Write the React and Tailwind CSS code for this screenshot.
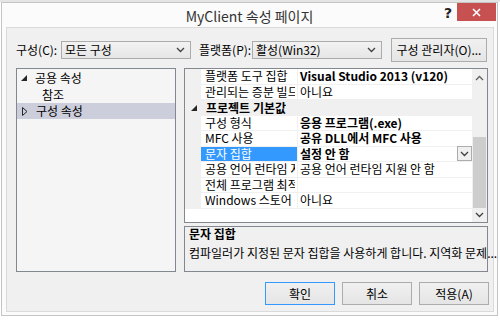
import React from "react";

const Chevron = ({ className = "" }) => (
  <svg width="9" height="6" viewBox="0 0 9 6" className={className}>
    <path d="M1 1 L4.5 4.5 L8 1" fill="none" stroke="#404040" strokeWidth="1.3" />
  </svg>
);
const ChevronUp = () => (
  <svg width="9" height="6" viewBox="0 0 9 6">
    <path d="M1 5 L4.5 1.5 L8 5" fill="none" stroke="#606060" strokeWidth="1.3" />
  </svg>
);

function Select({ w, text }) {
  return (
    <div className={`${w} h-[18px] border border-[#acacac] bg-gradient-to-b from-[#f2f2f2] to-[#e6e6e6] flex items-center justify-between pl-[3px] pr-[5px]`}>
      <span className="text-[12px] leading-none">{text}</span>
      <Chevron />
    </div>
  );
}

function Btn({ w, children, def }) {
  return (
    <div className={`${w} h-[23px] border ${def ? "border-[#3399ff]" : "border-[#acacac]"} bg-gradient-to-b from-[#f0f0f0] to-[#e5e5e5] flex items-center justify-center text-[12px] leading-none`}>
      {children}
    </div>
  );
}

const rows = [
  { n: "플랫폼 도구 집합", v: "Visual Studio 2013 (v120)", b: true },
  { n: "관리되는 증분 빌드 .", v: "아니요" },
  { cat: "프로젝트 기본값" },
  { n: "구성 형식", v: "응용 프로그램(.exe)", b: true },
  { n: "MFC 사용", v: "공유 DLL에서 MFC 사용", b: true },
  { n: "문자 집합", v: "설정 안 함", b: true, sel: true },
  { n: "공용 언어 런타임 지원", v: "공용 언어 런타임 지원 안 함" },
  { n: "전체 프로그램 최적화", v: "" },
  { n: "Windows 스토어 응용 프로그램", v: "아니요" },
];

export default function App() {
  return (
    <div className="w-[500px] h-[320px] bg-white relative overflow-hidden font-['Noto_Sans_CJK_KR','Noto_Sans',sans-serif] text-black">
      <div className="h-[2px] bg-[#e4e4e4]" />
      <div className="ml-[1px] w-[497px] h-[314px] border border-[#c4c4c4] bg-[#fbfbfb] flex flex-col">
        {/* title bar */}
        <div className="h-[24px] relative flex items-center justify-center">
          <span className="text-[14px] leading-none text-[#333] mt-[2px]">MyClient 속성 페이지</span>
          <span className="absolute left-[442px] top-[0px] text-[14px] font-bold text-[#222] font-['DejaVu_Sans',sans-serif]">?</span>
          <div className="absolute left-[455px] top-0 w-[39px] h-[18px] bg-[#c75050] flex items-center justify-center">
            <svg width="9" height="9" viewBox="0 0 9 9">
              <path d="M1 1 L8 8 M8 1 L1 8" stroke="white" strokeWidth="1.6" />
            </svg>
          </div>
        </div>
        {/* client */}
        <div className="ml-[4px] mb-[3px] w-[488px] flex-1 border border-[#dadada] bg-[#f0f0f0] flex flex-col">
          {/* config row */}
          <div className="flex items-center mt-[10px] h-[24px]">
            <span className="ml-[9px] w-[45px] text-[12px] leading-none">구성(C):</span>
            <Select w="w-[130px]" text="모든 구성" />
            <span className="ml-[8px] w-[53px] text-[12px] leading-none">플랫폼(P):</span>
            <Select w="w-[130px]" text="활성(Win32)" />
            <div className="ml-[9px] w-[96px] h-[24px] border border-[#acacac] bg-gradient-to-b from-[#f0f0f0] to-[#e5e5e5] flex items-center justify-center text-[12px] leading-none">
              구성 관리자(O)...
            </div>
          </div>
          {/* panels */}
          <div className="flex mt-[6px] h-[204px]">
            {/* tree */}
            <div className="ml-[9px] w-[160px] h-full border border-[#828790] bg-[#f5f5f5] pt-[1px]">
              <div className="h-[16px] flex items-center text-[12px] leading-none">
                <svg width="6" height="6" viewBox="0 0 6 6" className="ml-[4px] mr-[8px]">
                  <path d="M6 0 L6 6 L0 6 Z" fill="#262626" />
                </svg>
                공용 속성
              </div>
              <div className="h-[17px] flex items-center text-[12px] leading-none pl-[25px]">참조</div>
              <div className="h-[16px] flex items-center text-[12px] leading-none bg-[#cccedb]">
                <svg width="6" height="9" viewBox="0 0 6 9" className="ml-[5px] mr-[8px]">
                  <path d="M0.5 0.5 L5 4.5 L0.5 8.5 Z" fill="none" stroke="#262626" strokeWidth="1" />
                </svg>
                구성 속성
              </div>
            </div>
            {/* right */}
            <div className="ml-[8px] w-[304px] h-full flex flex-col">
              <div className="h-[155px] border border-[#828790] bg-white flex">
                <div className="flex-1 flex flex-col overflow-hidden">
                  {rows.map((r, i) =>
                    r.cat ? (
                      <div key={i} className="h-[15.5px] flex items-center bg-[#f0f0f0] text-[12px] leading-none font-bold">
                        <svg width="6" height="6" viewBox="0 0 6 6" className="ml-[6px] mr-[9px]">
                          <path d="M6 0 L6 6 L0 6 Z" fill="#262626" />
                        </svg>
                        {r.cat}
                      </div>
                    ) : (
                      <div key={i} className="h-[15.5px] flex bg-[#f0f0f0]">
                        <div className="w-[16px] shrink-0" />
                        <div className={`w-[96px] shrink-0 overflow-hidden flex items-center pl-[4px] border-b border-[#f0f0f0] ${r.sel ? "bg-[#3399ff] text-white" : "bg-white"}`}>
                          <span className="block w-[90px] overflow-hidden whitespace-nowrap text-[12px] leading-none">{r.n}</span>
                        </div>
                        <div className="w-[1px] bg-[#f0f0f0]" />
                        <div className={`flex-1 flex items-center justify-between pl-[2px] bg-white border-b border-[#f0f0f0] text-[12px] leading-none whitespace-nowrap ${r.b ? "font-bold" : ""}`}>
                          <span>{r.v}</span>
                          {r.sel && (
                            <div className="w-[15px] h-[15px] border border-[#acacac] bg-[#f0f0f0] flex items-center justify-center">
                              <Chevron />
                            </div>
                          )}
                        </div>
                      </div>
                    )
                  )}
                  <div className="flex-1 bg-white" />
                </div>
                {/* scrollbar */}
                <div className="w-[15px] bg-[#f0f0f0] flex flex-col">
                  <div className="h-[17px] flex items-center justify-center"><ChevronUp /></div>
                  <div className="h-[51px]" />
                  <div className="h-[71px] mx-[1px] bg-[#cdcdcd]" />
                  <div className="flex-1 flex items-center justify-center"><Chevron /></div>
                </div>
              </div>
              <div className="mt-[3px] flex-1 border border-[#828790] bg-[#f0f0f0] px-[4px] pt-0">
                <div className="text-[12px] leading-[14px] font-bold">문자 집합</div>
                <div className="text-[12px] leading-[14px] mt-[5px] whitespace-nowrap">컴파일러가 지정된 문자 집합을 사용하게 합니다. 지역화 문제...</div>
              </div>
            </div>
          </div>
          {/* buttons */}
          <div className="flex mt-[10px] ml-[258px] gap-[7px]">
            <Btn w="w-[70px]" def>확인</Btn>
            <Btn w="w-[70px]">취소</Btn>
            <Btn w="w-[70px]">적용(A)</Btn>
          </div>
        </div>
      </div>
    </div>
  );
}
